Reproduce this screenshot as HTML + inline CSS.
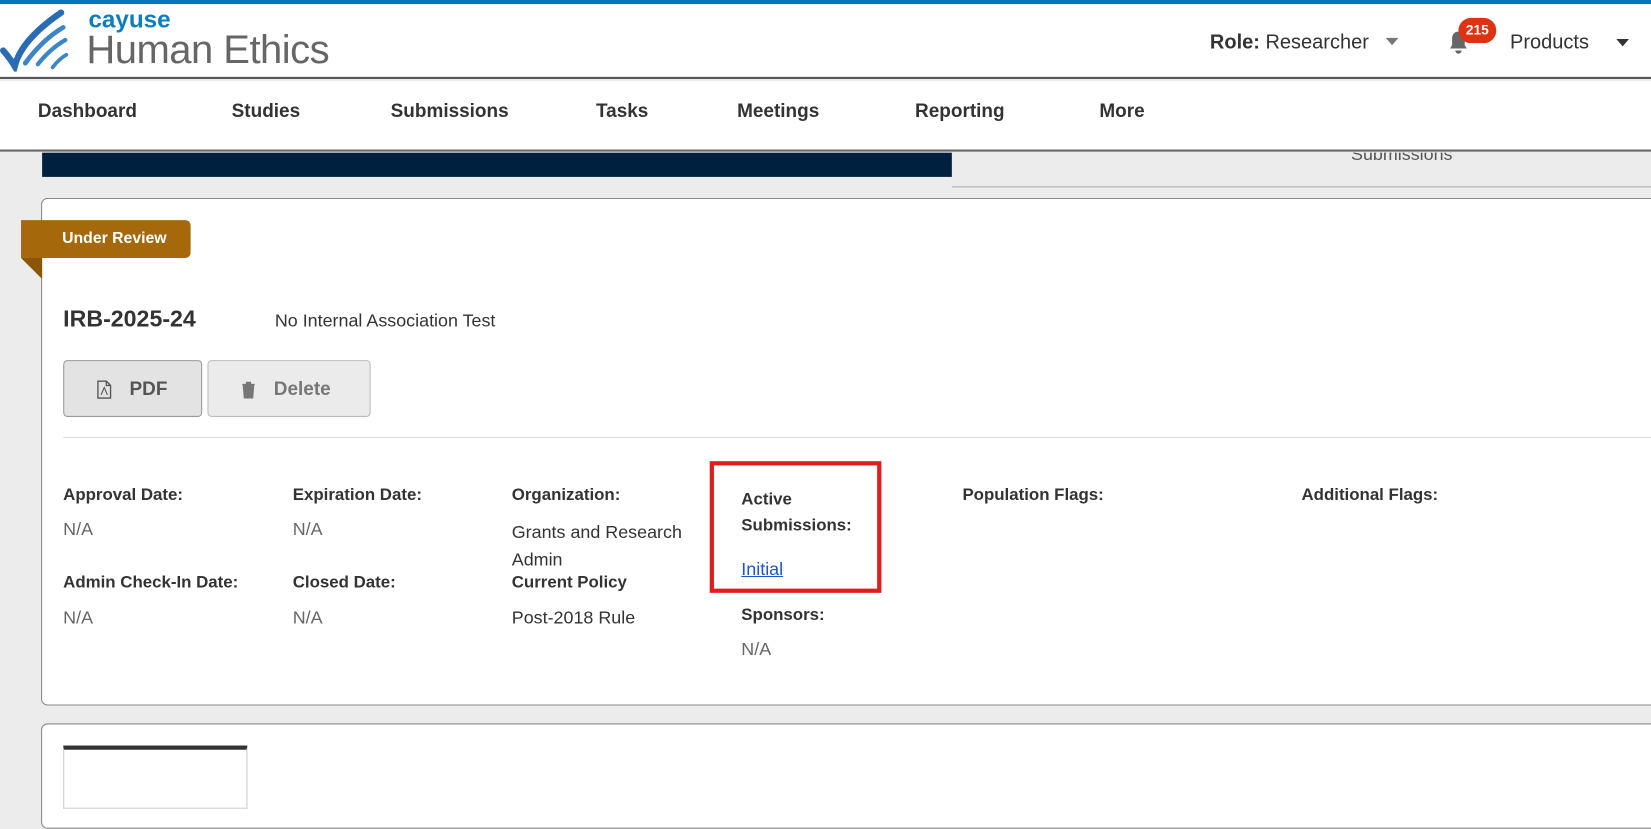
<!DOCTYPE html>
<html><head><meta charset="utf-8"><style>
*{margin:0;padding:0;box-sizing:border-box}
html,body{width:1651px;height:766px;overflow:hidden;background:#ebeceb}
#w{position:absolute;left:0;top:0;width:1568px;height:728px;transform:scale(1.0530);transform-origin:0 0;font-family:"Liberation Sans",sans-serif;color:#333}
.a{position:absolute;white-space:nowrap}
.b{font-weight:bold;font-size:16px;color:#333}
.v{font-size:17px;color:#666}
.nav{font-weight:bold;font-size:18px;color:#333;top:95px}
</style></head><body><div id="w">
<div class="a" style="left:0;top:0;width:1568px;height:4px;background:#0077bb"></div>
<div class="a" style="left:0;top:4px;width:1568px;height:71px;background:#fff;border-bottom:2px solid #555"></div>
<svg class="a" style="left:0;top:8px" width="70" height="60" viewBox="0 0 70 60">
<path d="M3 40 Q10 48 14 55 Q20 30 58 4" stroke="#2a6bb5" stroke-width="6" fill="none" stroke-linecap="round"/>
<path d="M24 52 Q40 30 60 18" stroke="#3a86c8" stroke-width="4.5" fill="none" stroke-linecap="round"/>
<path d="M36 53 Q48 38 62 30" stroke="#3a86c8" stroke-width="4" fill="none" stroke-linecap="round"/>
<path d="M50 56 Q56 48 63 44" stroke="#3a86c8" stroke-width="3.5" fill="none" stroke-linecap="round"/>
</svg>
<div class="a" style="left:84px;top:5px;font-size:23px;font-weight:bold;color:#0a7ec2">cayuse</div>
<div class="a" style="left:82px;top:27px;font-size:38px;color:#666;letter-spacing:-0.5px">Human Ethics</div>
<div class="a" style="left:1149px;top:30px;font-size:19px;color:#333"><b>Role:</b> Researcher</div>
<div class="a" style="left:1316px;top:36px;border-left:6px solid transparent;border-right:6px solid transparent;border-top:7px solid #777"></div>
<svg class="a" style="left:1374px;top:28px" width="22" height="24" viewBox="0 0 22 24"><path d="M11 2c-4 0-6 3-6 7v6l-2 3h16l-2-3V9c0-4-2-7-6-7zM8 20a3 3 0 0 0 6 0z" fill="#666"/></svg>
<div class="a" style="left:1385px;top:17px;width:36px;height:24px;background:#dd3311;border-radius:12px;color:#fff;font-size:13px;font-weight:bold;text-align:center;line-height:24px">215</div>
<div class="a" style="left:1434px;top:30px;font-size:19px;color:#333">Products</div>
<div class="a" style="left:1535px;top:37px;border-left:6px solid transparent;border-right:6px solid transparent;border-top:7px solid #333"></div>
<div class="a" style="left:0;top:77px;width:1568px;height:67px;background:#fff;border-bottom:2px solid #666"></div>
<div class="a nav" style="left:36px">Dashboard</div>
<div class="a nav" style="left:220px">Studies</div>
<div class="a nav" style="left:371px">Submissions</div>
<div class="a nav" style="left:566px">Tasks</div>
<div class="a nav" style="left:700px">Meetings</div>
<div class="a nav" style="left:869px">Reporting</div>
<div class="a nav" style="left:1044px">More</div>
<div class="a" style="left:40px;top:145px;width:864px;height:23px;background:#00203f"></div>
<div class="a" style="left:904px;top:145px;width:664px;height:33px;border-bottom:1px solid #aaa;background:#ebeceb"></div>
<div class="a" style="left:1283px;top:137px;font-size:17px;color:#555;clip-path:inset(8px 0 0 0)">Submissions</div>
<div class="a" style="left:39px;top:188px;width:1560px;height:482px;background:#fff;border:1px solid #888;border-radius:6px"></div>
<div class="a" style="left:20px;top:209px;width:161px;height:36px;background:#a5690b;border-radius:0 5px 5px 0;color:#fff;font-weight:bold;font-size:15px;line-height:36px;padding-left:39px">Under Review</div>
<div class="a" style="left:20px;top:245px;border-top:20px solid #8a5708;border-left:20px solid transparent"></div>
<div class="a" style="left:60px;top:290px;font-size:22px;font-weight:bold;color:#333">IRB-2025-24</div>
<div class="a" style="left:261px;top:295px;font-size:17px;color:#333">No Internal Association Test</div>
<div class="a" style="left:60px;top:342px;width:132px;height:54px;background:#e3e3e3;border:1px solid #999;border-radius:4px"></div>
<svg class="a" style="left:92px;top:361px" width="14" height="18" viewBox="0 0 14 18"><path d="M1 1h8l4 4v12H1z M9 1v4h4" fill="none" stroke="#555" stroke-width="1.3"/><path d="M4 14l3-7 3 7" fill="none" stroke="#555" stroke-width="1"/></svg>
<div class="a" style="left:123px;top:359px;font-size:18px;font-weight:bold;color:#555">PDF</div>
<div class="a" style="left:197px;top:342px;width:155px;height:54px;background:#ebebeb;border:1px solid #bbb;border-radius:4px"></div>
<svg class="a" style="left:229px;top:362px" width="14" height="17" viewBox="0 0 14 17"><path d="M1 3h12M5 3V1h4v2M2 4h10l-1 12H3z" fill="#777" stroke="#777"/></svg>
<div class="a" style="left:260px;top:359px;font-size:18px;font-weight:bold;color:#777">Delete</div>
<div class="a" style="left:60px;top:415px;width:1508px;height:1px;background:#ddd"></div>
<div class="a b" style="left:60px;top:462px">Approval Date:</div>
<div class="a v" style="left:60px;top:493px">N/A</div>
<div class="a b" style="left:60px;top:545px">Admin Check-In Date:</div>
<div class="a v" style="left:60px;top:577px">N/A</div>
<div class="a b" style="left:278px;top:462px">Expiration Date:</div>
<div class="a v" style="left:278px;top:493px">N/A</div>
<div class="a b" style="left:278px;top:545px">Closed Date:</div>
<div class="a v" style="left:278px;top:577px">N/A</div>
<div class="a b" style="left:486px;top:462px">Organization:</div>
<div class="a" style="left:486px;top:493px;font-size:17px;color:#333;line-height:26px">Grants and Research<br>Admin</div>
<div class="a b" style="left:486px;top:545px">Current Policy</div>
<div class="a" style="left:486px;top:577px;font-size:17px;color:#333">Post-2018 Rule</div>
<div class="a" style="left:674px;top:438px;width:163px;height:125px;border:4px solid #e21b1b"></div>
<div class="a b" style="left:704px;top:462px;line-height:25px">Active<br>Submissions:</div>
<div class="a" style="left:704px;top:531px;font-size:17px;color:#1a55cc;text-decoration:underline">Initial</div>
<div class="a b" style="left:704px;top:576px">Sponsors:</div>
<div class="a v" style="left:704px;top:607px">N/A</div>
<div class="a b" style="left:914px;top:462px">Population Flags:</div>
<div class="a b" style="left:1236px;top:462px">Additional Flags:</div>
<div class="a" style="left:39px;top:687px;width:1560px;height:100px;background:#fff;border:1px solid #888;border-radius:6px"></div>
<div class="a" style="left:60px;top:708px;width:175px;height:60px;border:1px solid #ccc;border-top:4px solid #333"></div>
</div></body></html>
